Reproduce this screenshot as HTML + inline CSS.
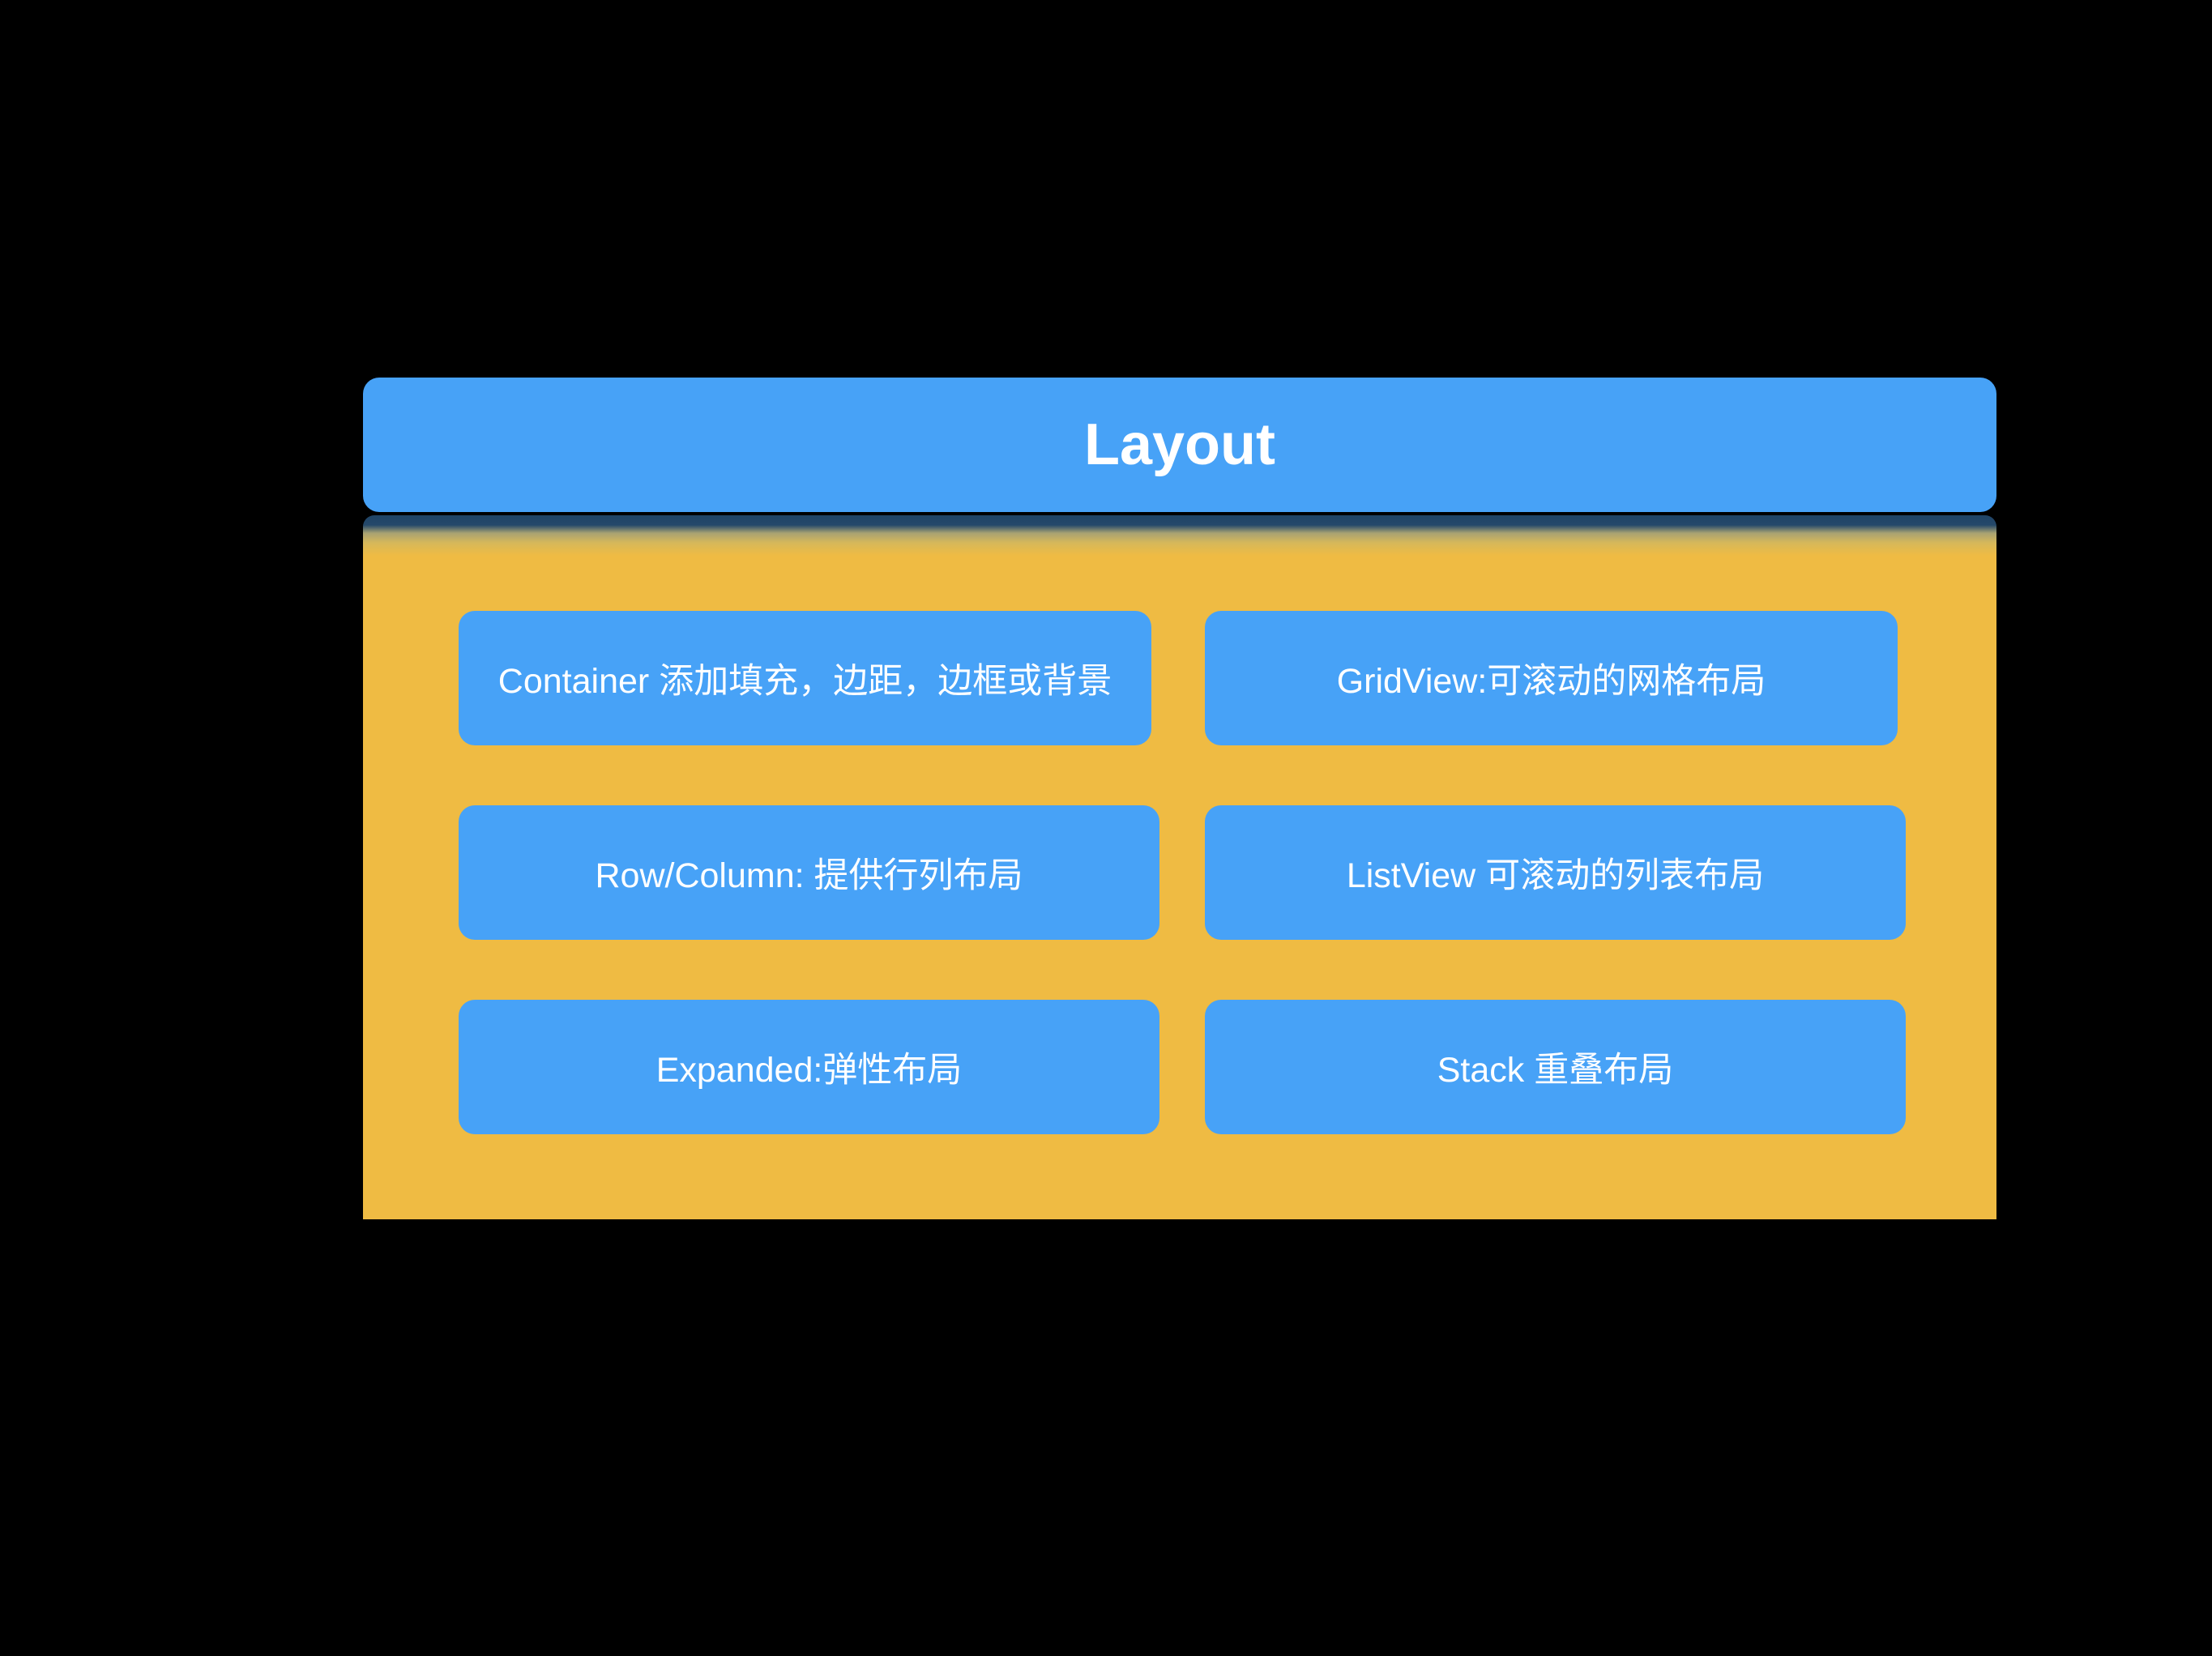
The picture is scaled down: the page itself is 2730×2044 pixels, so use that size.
<!DOCTYPE html>
<html><head><meta charset="utf-8"><style>
html,body{margin:0;padding:0;background:#000;}
body{width:2730px;height:2044px;position:relative;overflow:hidden;font-family:"Liberation Sans","Noto Sans CJK SC",sans-serif;}
.hdr{position:absolute;left:448px;top:466px;width:2016px;height:166px;background:#47A2F7;border-radius:20px;color:#fff;font-size:72px;font-weight:bold;display:flex;align-items:center;justify-content:center;}
.yel{position:absolute;left:448px;top:636px;width:2016px;height:869px;background:linear-gradient(#1f4466 0px,#24486a 12px,#a8a272 22px,#d6b85a 34px,#EFBB43 50px,#EFBB43 100%);border-radius:14px 14px 0 0;}
.b{position:absolute;background:#47A2F7;border-radius:20px;color:#fff;font-size:43px;display:flex;align-items:center;justify-content:center;}
</style></head><body>
<div class="hdr">Layout</div>
<div class="yel"></div>
<div class="b" style="left:566px;top:754px;width:855px;height:166px;">Container 添加填充，边距，边框或背景</div>
<div class="b" style="left:1487px;top:754px;width:855px;height:166px;">GridView:可滚动的网格布局</div>
<div class="b" style="left:566px;top:994px;width:865px;height:166px;">Row/Column: 提供行列布局</div>
<div class="b" style="left:1487px;top:994px;width:865px;height:166px;">ListView 可滚动的列表布局</div>
<div class="b" style="left:566px;top:1234px;width:865px;height:166px;">Expanded:弹性布局</div>
<div class="b" style="left:1487px;top:1234px;width:865px;height:166px;">Stack 重叠布局</div>
</body></html>
